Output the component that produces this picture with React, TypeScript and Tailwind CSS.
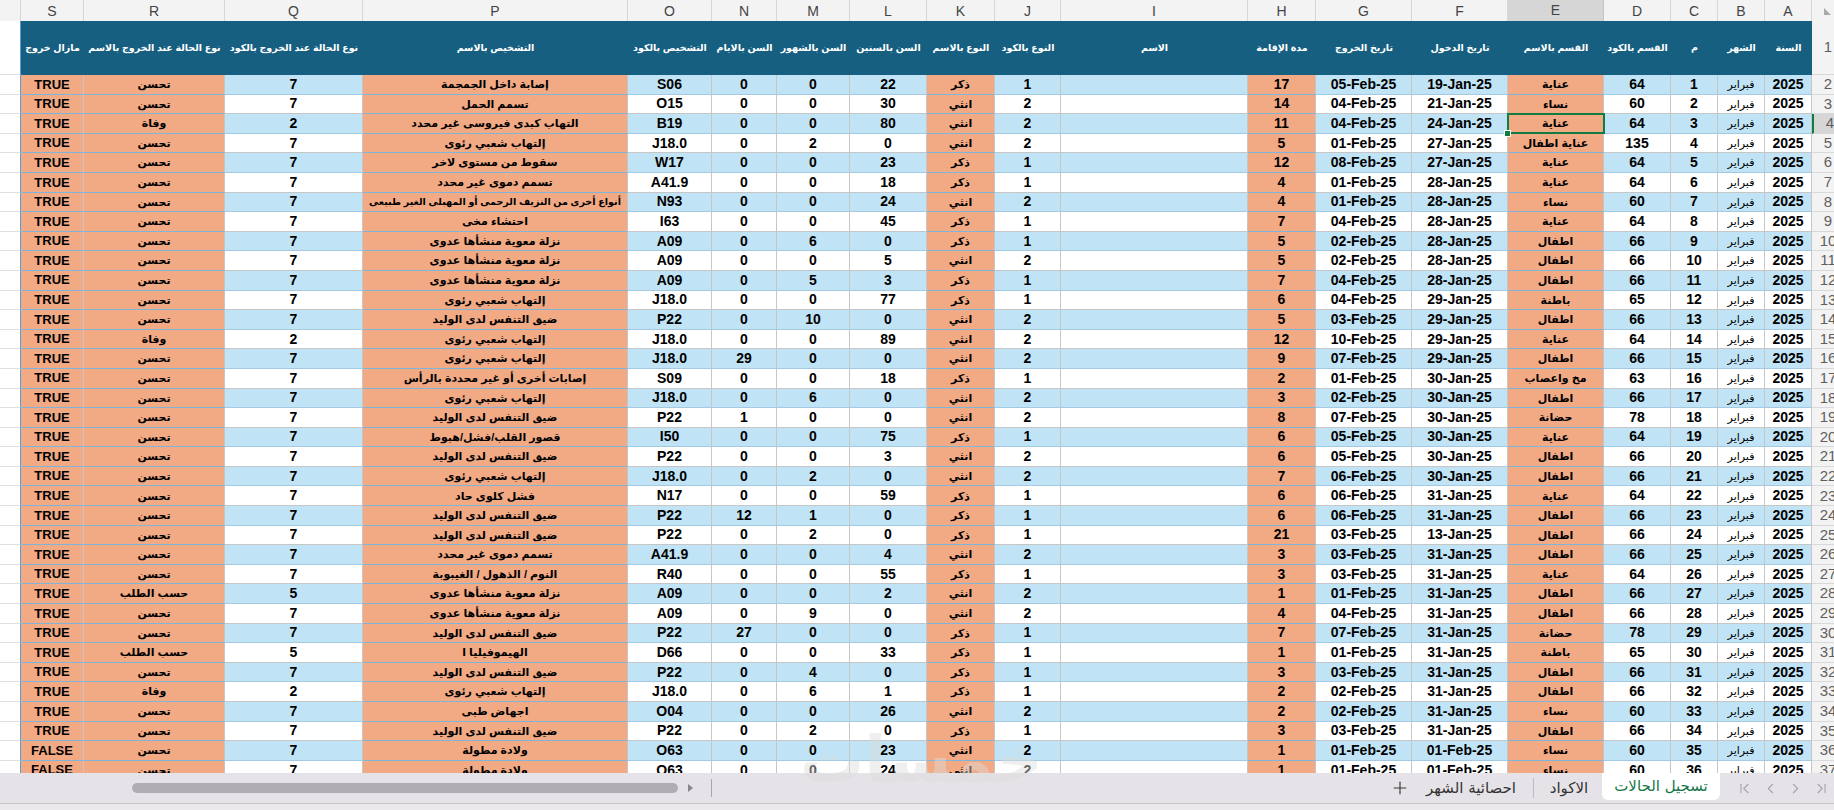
import { ChevronFirst, ChevronLast, ChevronLeft, ChevronRight, Plus } from 'lucide-react';

// columns in screen order (the sheet is right-to-left, so A sits on the right)
const GRID =
  'grid grid-cols-[21px_63px_141px_138px_265px_84px_65px_73px_77px_68px_66px_187px_68px_96px_96px_96px_67px_47px_47px_47px_22px]';

const ORDER = ['S', 'R', 'Q', 'P', 'O', 'N', 'M', 'L', 'K', 'J', 'I', 'H', 'G', 'F', 'E', 'D', 'C', 'B', 'A'];

const ORANGE = new Set(['E', 'H', 'K', 'P', 'R', 'S']);
const ARABIC = new Set(['E', 'K', 'P', 'R']);

const HEAD: Record<string, string> = {
  A: 'السنة',
  B: 'الشهر',
  C: 'م',
  D: 'القسم بالكود',
  E: 'القسم بالاسم',
  F: 'تاريخ الدخول',
  G: 'تاريخ الخروج',
  H: 'مدة الإقامة',
  I: 'الاسم',
  J: 'النوع بالكود',
  K: 'النوع بالاسم',
  L: 'السن بالسنين',
  M: 'السن بالشهور',
  N: 'السن بالايام',
  O: 'التشخيص بالكود',
  P: 'التشخيص بالاسم',
  Q: 'نوع الحالة عند الخروج بالكود',
  R: 'نوع الحالة عند الخروج بالاسم',
  S: 'مازال خروج',
};

// C | D | E | F | G | H | J | K | L | M | N | O | P | Q | R | S
const ROWS = [
  '1|64|عناية|19-Jan-25|05-Feb-25|17|1|ذكر|22|0|0|S06|إصابة داخل الجمجمة|7|تحسن|TRUE',
  '2|60|نساء|21-Jan-25|04-Feb-25|14|2|انثي|30|0|0|O15|تسمم الحمل|7|تحسن|TRUE',
  '3|64|عناية|24-Jan-25|04-Feb-25|11|2|انثي|80|0|0|B19|التهاب كبدى فيروسى غير محدد|2|وفاة|TRUE',
  '4|135|عناية اطفال|27-Jan-25|01-Feb-25|5|2|انثي|0|2|0|J18.0|إلتهاب شعبي رئوى|7|تحسن|TRUE',
  '5|64|عناية|27-Jan-25|08-Feb-25|12|1|ذكر|23|0|0|W17|سقوط من مستوى لاخر|7|تحسن|TRUE',
  '6|64|عناية|28-Jan-25|01-Feb-25|4|1|ذكر|18|0|0|A41.9|تسمم دموى غير محدد|7|تحسن|TRUE',
  '7|60|نساء|28-Jan-25|01-Feb-25|4|2|انثي|24|0|0|N93|أنواع أخرى من النزيف الرحمى أو المهبلى الغير طبيعى|7|تحسن|TRUE',
  '8|64|عناية|28-Jan-25|04-Feb-25|7|1|ذكر|45|0|0|I63|احتشاء مخى|7|تحسن|TRUE',
  '9|66|اطفال|28-Jan-25|02-Feb-25|5|1|ذكر|0|6|0|A09|نزلة معوية منشأها عدوى|7|تحسن|TRUE',
  '10|66|اطفال|28-Jan-25|02-Feb-25|5|2|انثي|5|0|0|A09|نزلة معوية منشأها عدوى|7|تحسن|TRUE',
  '11|66|اطفال|28-Jan-25|04-Feb-25|7|1|ذكر|3|5|0|A09|نزلة معوية منشأها عدوى|7|تحسن|TRUE',
  '12|65|باطنة|29-Jan-25|04-Feb-25|6|1|ذكر|77|0|0|J18.0|إلتهاب شعبي رئوى|7|تحسن|TRUE',
  '13|66|اطفال|29-Jan-25|03-Feb-25|5|2|انثي|0|10|0|P22|ضيق التنفس لدى الوليد|7|تحسن|TRUE',
  '14|64|عناية|29-Jan-25|10-Feb-25|12|2|انثي|89|0|0|J18.0|إلتهاب شعبي رئوى|2|وفاة|TRUE',
  '15|66|اطفال|29-Jan-25|07-Feb-25|9|2|انثي|0|0|29|J18.0|إلتهاب شعبي رئوى|7|تحسن|TRUE',
  '16|63|مخ واعصاب|30-Jan-25|01-Feb-25|2|1|ذكر|18|0|0|S09|إصابات أخرى أو غير محددة بالرأس|7|تحسن|TRUE',
  '17|66|اطفال|30-Jan-25|02-Feb-25|3|2|انثي|0|6|0|J18.0|إلتهاب شعبي رئوى|7|تحسن|TRUE',
  '18|78|حضانة|30-Jan-25|07-Feb-25|8|2|انثي|0|0|1|P22|ضيق التنفس لدى الوليد|7|تحسن|TRUE',
  '19|64|عناية|30-Jan-25|05-Feb-25|6|1|ذكر|75|0|0|I50|قصور القلب/فشل/هبوط|7|تحسن|TRUE',
  '20|66|اطفال|30-Jan-25|05-Feb-25|6|2|انثي|3|0|0|P22|ضيق التنفس لدى الوليد|7|تحسن|TRUE',
  '21|66|اطفال|30-Jan-25|06-Feb-25|7|2|انثي|0|2|0|J18.0|إلتهاب شعبي رئوى|7|تحسن|TRUE',
  '22|64|عناية|31-Jan-25|06-Feb-25|6|1|ذكر|59|0|0|N17|فشل كلوى حاد|7|تحسن|TRUE',
  '23|66|اطفال|31-Jan-25|06-Feb-25|6|1|ذكر|0|1|12|P22|ضيق التنفس لدى الوليد|7|تحسن|TRUE',
  '24|66|اطفال|13-Jan-25|03-Feb-25|21|1|ذكر|0|2|0|P22|ضيق التنفس لدى الوليد|7|تحسن|TRUE',
  '25|66|اطفال|31-Jan-25|03-Feb-25|3|2|انثي|4|0|0|A41.9|تسمم دموى غير محدد|7|تحسن|TRUE',
  '26|64|عناية|31-Jan-25|03-Feb-25|3|1|ذكر|55|0|0|R40|النوم / الذهول / الغيبوبة|7|تحسن|TRUE',
  '27|66|اطفال|31-Jan-25|01-Feb-25|1|2|انثي|2|0|0|A09|نزلة معوية منشأها عدوى|5|حسب الطلب|TRUE',
  '28|66|اطفال|31-Jan-25|04-Feb-25|4|2|انثي|0|9|0|A09|نزلة معوية منشأها عدوى|7|تحسن|TRUE',
  '29|78|حضانة|31-Jan-25|07-Feb-25|7|1|ذكر|0|0|27|P22|ضيق التنفس لدى الوليد|7|تحسن|TRUE',
  '30|65|باطنة|31-Jan-25|01-Feb-25|1|1|ذكر|33|0|0|D66|الهيموفيليا ا|5|حسب الطلب|TRUE',
  '31|66|اطفال|31-Jan-25|03-Feb-25|3|1|ذكر|0|4|0|P22|ضيق التنفس لدى الوليد|7|تحسن|TRUE',
  '32|66|اطفال|31-Jan-25|02-Feb-25|2|1|ذكر|1|6|0|J18.0|إلتهاب شعبي رئوى|2|وفاة|TRUE',
  '33|60|نساء|31-Jan-25|02-Feb-25|2|2|انثي|26|0|0|O04|اجهاض طبى|7|تحسن|TRUE',
  '34|66|اطفال|31-Jan-25|03-Feb-25|3|1|ذكر|0|2|0|P22|ضيق التنفس لدى الوليد|7|تحسن|TRUE',
  '35|60|نساء|01-Feb-25|01-Feb-25|1|2|انثي|23|0|0|O63|ولادة  مطولة|7|تحسن|FALSE',
  '36|60|نساء|01-Feb-25|01-Feb-25|1|2|انثي|24|0|0|O63|ولادة  مطولة|7|تحسن|FALSE',
];

function toCells(line: string): Record<string, string> {
  const f = line.split('|');
  return {
    A: '2025',
    B: 'فبراير',
    C: f[0],
    D: f[1],
    E: f[2],
    F: f[3],
    G: f[4],
    H: f[5],
    I: '',
    J: f[6],
    K: f[7],
    L: f[8],
    M: f[9],
    N: f[10],
    O: f[11],
    P: f[12],
    Q: f[13],
    R: f[14],
    S: f[15],
  };
}

function ColumnLetters() {
  return (
    <div className={`${GRID} h-[21px] bg-[#f3f3f3] text-[14px] text-[#444]`}>
      <div className="border-b border-r border-[#d6d6d6]" />
      {ORDER.map((k) =>
        k === 'E' ? (
          <div
            key={k}
            className="flex items-center justify-center border-r border-r-[#c4c4c4] border-b-2 border-b-[#107c41] bg-[#d6d6d6]"
          >
            {k}
          </div>
        ) : (
          <div key={k} className="flex items-center justify-center border-b border-r border-[#d6d6d6]">
            {k}
          </div>
        ),
      )}
      <div className="border-b border-[#d6d6d6] pl-[12px] pt-[8px]">
        <svg width="7" height="7" viewBox="0 0 7 7">
          <polygon points="0,0 0,7 7,7" fill="#a9a9a9" />
        </svg>
      </div>
    </div>
  );
}

function RowNumber({ n, selected }: { n: number; selected?: boolean }) {
  return (
    <div
      className={
        selected
          ? 'overflow-hidden border-b border-b-[#d6d6d6] border-l-2 border-l-[#107c41] bg-[#d6d6d6]'
          : 'overflow-hidden border-b border-b-[#d9d9d9] bg-[#f3f3f3]'
      }
    >
      <div className="flex h-full w-[32px] items-center justify-center text-[15px] text-[#5f5f5f]">{n}</div>
    </div>
  );
}

function HeaderRow() {
  return (
    <div className={`${GRID} h-[54px]`}>
      <div className="border-b border-r border-b-[#dedede] border-r-[#5b9bd5] bg-white" />
      {ORDER.map((k) => (
        <div
          key={k}
          className="flex items-center justify-center overflow-hidden whitespace-nowrap bg-[#175f81] text-[9.5px] font-bold text-white"
        >
          {HEAD[k]}
        </div>
      ))}
      <RowNumber n={1} />
    </div>
  );
}

function cellClass(k: string, even: boolean, text: string): string {
  let c =
    'flex items-center justify-center overflow-hidden whitespace-nowrap border-r border-b border-r-[#c6c6c6] text-black ';
  if (ORANGE.has(k)) c += 'bg-[#f2aa85] border-b-[#7fb5da] ';
  else if (even) c += 'bg-[#c0e4f5] border-b-[#a3cae2] ';
  else c += 'bg-white border-b-[#c6c6c6] ';
  if (k === 'B') c += 'text-[11px] font-normal';
  else if (k === 'P' && text.length > 40) c += 'text-[9.6px] font-bold';
  else if (ARABIC.has(k)) c += 'text-[11px] font-bold';
  else if (k === 'S') c += 'text-[13px] font-bold';
  else c += 'text-[14px] font-bold';
  return c;
}

function DataRow({ n, line }: { n: number; line: string }) {
  const cells = toCells(line);
  const even = n % 2 === 0;
  return (
    <div className={`${GRID} h-[19.6px]`}>
      <div className="border-b border-r border-b-[#e0e0e0] border-r-[#5b9bd5] bg-white" />
      {ORDER.map((k) =>
        n === 4 && k === 'E' ? (
          <div key={k} className={`${cellClass(k, even, cells[k])} relative overflow-visible`}>
            {cells[k]}
            <div className="absolute -left-px -top-px z-10 h-[21px] w-[98px] border-2 border-[#107c41]" />
            <div className="absolute -bottom-[4px] -left-[4px] z-10 h-[7px] w-[7px] border border-white bg-[#107c41]" />
          </div>
        ) : (
          <div key={k} className={cellClass(k, even, cells[k])}>
            {cells[k]}
          </div>
        ),
      )}
      <RowNumber n={n} selected={n === 4} />
    </div>
  );
}

function SheetTabs() {
  return (
    <div className="relative h-[37px] shrink-0 font-['DejaVu_Sans',sans-serif]">
      <div className="flex h-[30px] items-start bg-[#e6e3e8]">
        <div className="flex h-full w-[700px] items-center">
          <div className="ml-[132px] h-[10px] w-[546px] rounded-full bg-[#b0adb3]" />
          <svg className="ml-[10px]" width="5" height="8" viewBox="0 0 5 8">
            <polygon points="0,0 5,4 0,8" fill="#8a878c" />
          </svg>
        </div>
        <div className="flex h-full w-[22px] items-center justify-center">
          <div className="h-[18px] w-px bg-[#a9a7ab]" />
        </div>
        <div className="flex-1" />
        <div className="flex h-full w-[24px] items-center justify-center text-[#3b3b3b]">
          <Plus size={20} strokeWidth={1.4} />
        </div>
        <div className="flex h-full w-[118px] items-center justify-center text-[15px] text-[#333]">احصائية الشهر</div>
        <div className="flex h-full w-[6px] items-center justify-center">
          <div className="h-[20px] w-px bg-[#bdbbc0]" />
        </div>
        <div className="flex h-full w-[66px] items-center justify-center text-[15px] text-[#333]">الاكواد</div>
        <div className="flex h-[27px] w-[118px] items-center justify-center rounded-b-[6px] bg-white text-[15px] text-[#16774a]">
          تسجيل الحالات
        </div>
        <div className="flex h-full w-[114px] items-center pl-[12px] text-[#a6a4a8]">
          <div className="flex w-[26px] justify-center">
            <ChevronFirst size={17} strokeWidth={1.5} />
          </div>
          <div className="flex w-[26px] justify-center">
            <ChevronLeft size={17} strokeWidth={1.5} />
          </div>
          <div className="flex w-[26px] justify-center">
            <ChevronRight size={17} strokeWidth={1.5} />
          </div>
          <div className="flex w-[26px] justify-center">
            <ChevronLast size={17} strokeWidth={1.5} />
          </div>
        </div>
      </div>
      <div className="h-[7px] border-t border-[#c9c6cb] bg-[#ebe9ec]" />
    </div>
  );
}

export default function App() {
  return (
    <div className="relative flex h-[810px] w-[1834px] flex-col overflow-hidden bg-white font-['Liberation_Sans','DejaVu_Sans',sans-serif]">
      <div className="h-[773px] shrink-0 overflow-hidden">
        <ColumnLetters />
        <HeaderRow />
        {ROWS.map((line, i) => (
          <DataRow key={i} n={i + 2} line={line} />
        ))}
      </div>
      <SheetTabs />
      {/* faint marketplace watermark over the bottom */}
      <div className="pointer-events-none absolute left-[800px] top-[728px] z-20 text-[64px] font-bold leading-none text-[#dcdcdc] opacity-45 font-['DejaVu_Sans',sans-serif]">
        خمسات
      </div>
    </div>
  );
}
